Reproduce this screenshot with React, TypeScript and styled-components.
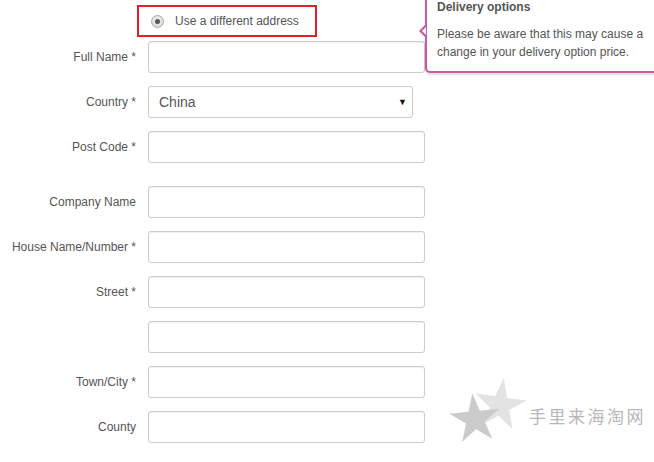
import styled, { createGlobalStyle } from "styled-components";

const GlobalStyle = createGlobalStyle`
  html, body {
    margin: 0;
    padding: 0;
    background: #fff;
  }
  body {
    font-family: "Liberation Sans", Arial, sans-serif;
    font-size: 12px;
    color: #555;
    overflow: hidden;
  }
`;

type Field = {
  label: string;
  kind?: "select";
  spaced?: boolean;
};

const fields: Field[] = [
  { label: "Full Name *" },
  { label: "Country *", kind: "select" },
  { label: "Post Code *" },
  { label: "Company Name", spaced: true },
  { label: "House Name/Number *" },
  { label: "Street *" },
  { label: "" },
  { label: "Town/City *" },
  { label: "County" },
];

const STAR = "50,0 61,35 98,35 68,57 79,91 50,70 21,91 32,57 2,35 39,35";

const App = () => {
  return (
    <>
      <GlobalStyle />
      <Page>
        <AddressOption>
          <Radio />
          <span>Use a different address</span>
        </AddressOption>

        <Fields>
          {fields.map((field, i) => (
            <Row key={i} $spaced={field.spaced}>
              <Label>{field.label}</Label>
              {field.kind === "select" ? (
                <Select>
                  <span>China</span>
                  <Caret>▼</Caret>
                </Select>
              ) : (
                <Input />
              )}
            </Row>
          ))}
        </Fields>

        <Popover>
          <PopoverTitle>Delivery options</PopoverTitle>
          <PopoverText>
            Please be aware that this may cause a
            <br />
            change in your delivery option price.
          </PopoverText>
        </Popover>

        <Watermark>
          <Stars viewBox="0 0 78 70" width="78" height="70">
            <polygon
              points={STAR}
              fill="#e3e3e3"
              transform="translate(24 0) scale(0.54) rotate(8 50 50)"
            />
            <polygon
              points={STAR}
              fill="#cbcbcb"
              transform="translate(0 15) scale(0.52) rotate(-6 50 50)"
            />
          </Stars>
          <WatermarkText>手里来海淘网</WatermarkText>
        </Watermark>
      </Page>
    </>
  );
};

const Page = styled.div`
  position: relative;
  width: 654px;
  height: 462px;
  overflow: hidden;
`;

const AddressOption = styled.label`
  display: flex;
  align-items: center;
  gap: 11px;
  box-sizing: border-box;
  width: 180px;
  height: 32px;
  margin: 5px 0 0 137px;
  padding-left: 12px;
  border: 2px solid #e3202a;
  font-size: 12px;
  color: #555;
`;

const Radio = styled.span`
  position: relative;
  box-sizing: border-box;
  width: 13px;
  height: 13px;
  border-radius: 50%;
  border: 1px solid #a8a8a8;
  background: radial-gradient(circle at 50% 40%, #f4f4f4, #d0d0d0);

  &::after {
    content: "";
    position: absolute;
    left: 3px;
    top: 3px;
    width: 5px;
    height: 5px;
    border-radius: 50%;
    background: #555;
  }
`;

const Fields = styled.div`
  display: flex;
  flex-direction: column;
  gap: 13px;
  margin-top: 4px;
`;

const Row = styled.div<{ $spaced?: boolean }>`
  display: flex;
  align-items: center;
  gap: 12px;
  margin-top: ${(p) => (p.$spaced ? "10px" : "0")};
`;

const Label = styled.div`
  width: 136px;
  text-align: right;
  font-size: 12px;
  color: #555;
  white-space: nowrap;
`;

const Input = styled.div`
  box-sizing: border-box;
  width: 277px;
  height: 32px;
  border: 1px solid #ccc;
  border-radius: 3px;
  background: #fff;
  box-shadow: inset 0 1px 1px rgba(0, 0, 0, 0.06);
`;

const Select = styled.div`
  box-sizing: border-box;
  display: flex;
  align-items: center;
  justify-content: space-between;
  width: 265px;
  height: 32px;
  padding: 0 5px 0 10px;
  border: 1px solid #ccc;
  border-radius: 3px;
  background: #fff;
  font-size: 14px;
  color: #555;
`;

const Caret = styled.span`
  font-size: 9px;
  color: #111;
`;

const Popover = styled.div`
  position: absolute;
  left: 425px;
  top: -12px;
  box-sizing: border-box;
  width: 260px;
  padding: 8px 10px 10px;
  background: #fff;
  border: 2px solid #c65ba2;
  border-radius: 5px;
  box-shadow: 0 2px 2px rgba(0, 0, 0, 0.12);
  font-size: 12px;
  line-height: 18px;
  color: #555;

  &::before,
  &::after {
    content: "";
    position: absolute;
    border-style: solid;
    border-color: transparent;
  }
  &::before {
    left: -8px;
    top: 35px;
    border-width: 6px 6px 6px 0;
    border-right-color: #c65ba2;
  }
  &::after {
    left: -5px;
    top: 37px;
    border-width: 4px 4px 4px 0;
    border-right-color: #fff;
  }
`;

const PopoverTitle = styled.div`
  font-weight: bold;
  color: #555;
`;

const PopoverText = styled.p`
  margin: 9px 0 0;
`;

const Watermark = styled.div`
  position: absolute;
  left: 449px;
  top: 378px;
  display: flex;
  align-items: center;
  gap: 2px;
  pointer-events: none;
`;

const Stars = styled.svg`
  display: block;
`;

const WatermarkText = styled.span`
  font-family: "Noto Sans CJK SC", sans-serif;
  font-size: 17px;
  letter-spacing: 2.5px;
  color: #b8b8b8;
  margin-top: 4px;
`;

export default App;
